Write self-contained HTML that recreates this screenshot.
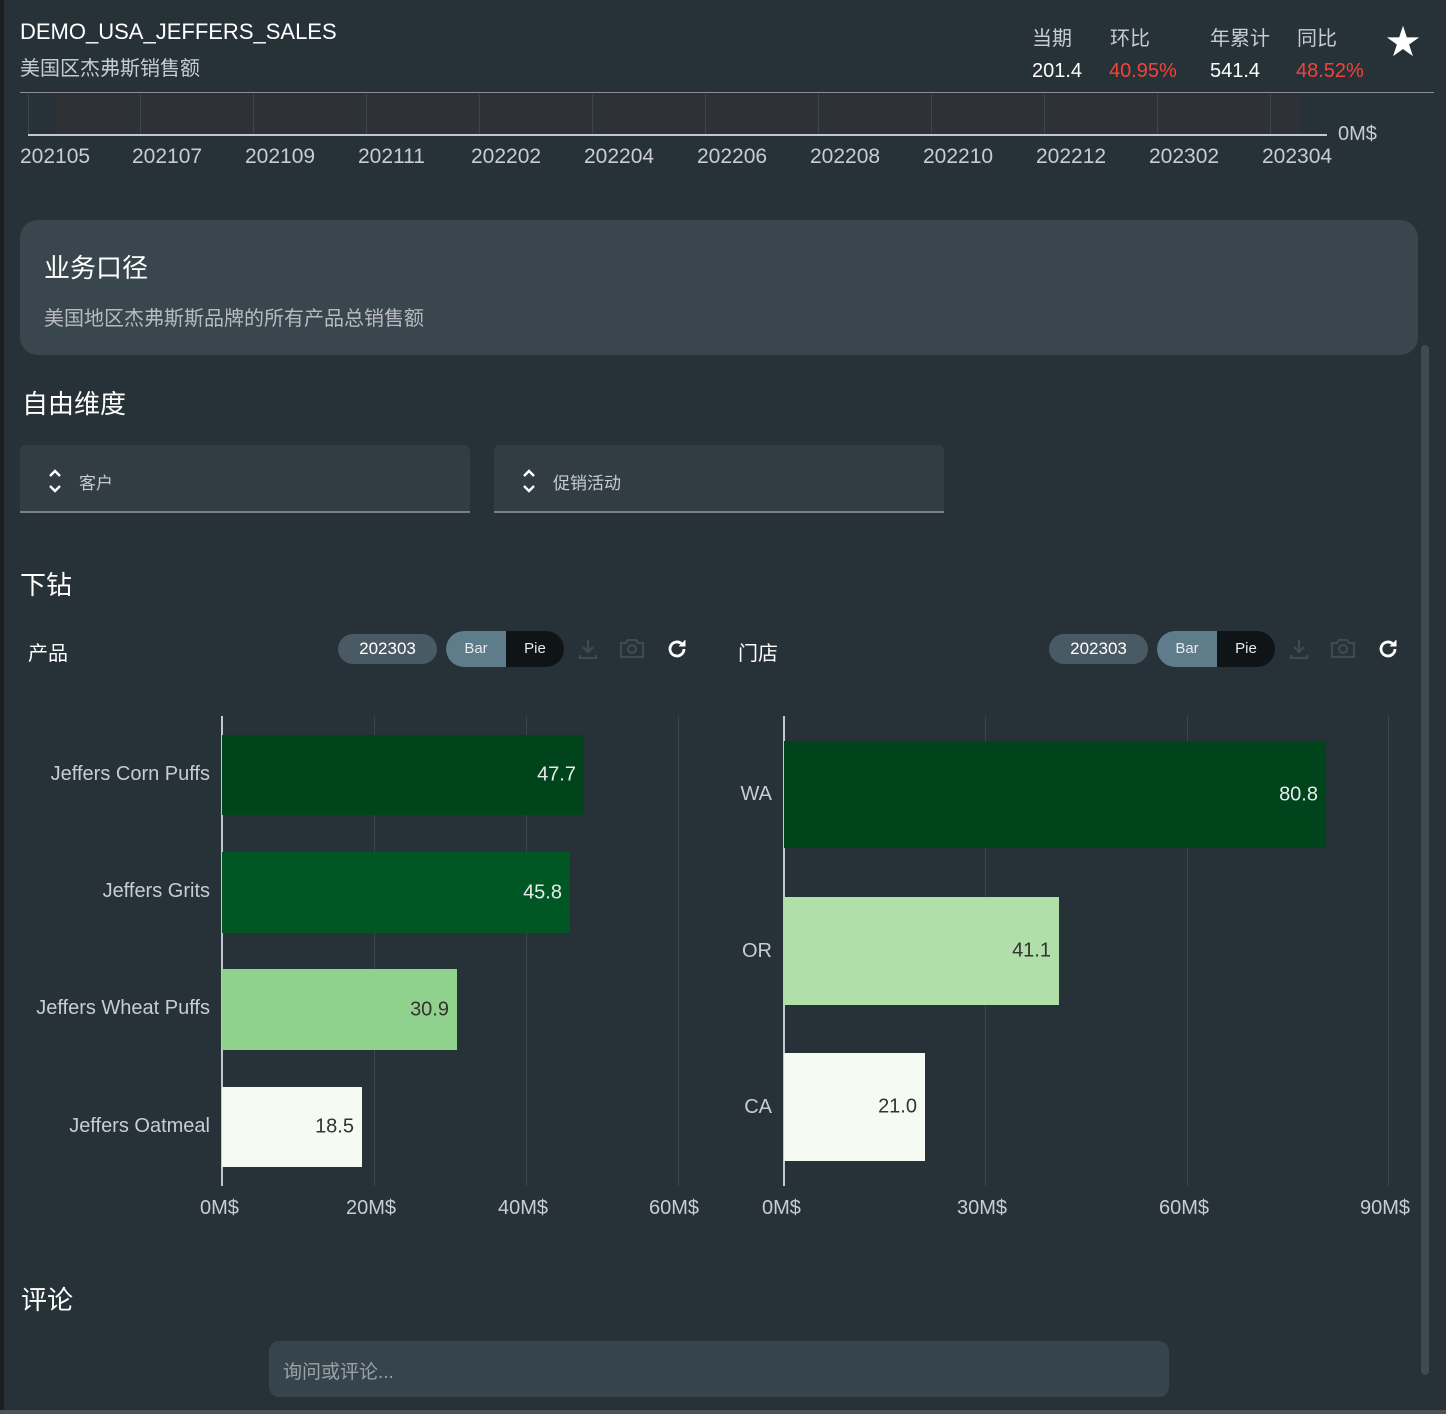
<!DOCTYPE html>
<html><head><meta charset="utf-8"><style>
*{margin:0;padding:0;box-sizing:border-box}
body{width:1446px;height:1414px;background:#263238;font-family:"Liberation Sans","Noto Sans CJK SC",sans-serif;color:#e8eaed;position:relative;overflow:hidden}
.a{position:absolute;white-space:nowrap}
.g{position:absolute;background:#3b464d;width:1px}
.lbl{color:#c9cbd6;font-size:20px}
.pill{position:absolute;height:30px;border-radius:15px;font-size:17px;line-height:30px;text-align:center}
.bar{position:absolute}
.val{position:absolute;font-size:20px;right:8px;top:50%;transform:translateY(-50%)}
</style></head><body>
<div class="a" style="left:0;top:0;width:4px;height:1414px;background:#1b1f22"></div>
<div class="a" style="left:20px;top:19px;font-size:22px;color:#fff">DEMO_USA_JEFFERS_SALES</div>
<div class="a" style="left:20px;top:52px;font-size:20px;color:#c8ccd0">美国区杰弗斯销售额</div>
<div class="a" style="left:1032px;top:22px;font-size:20px;color:#c8ccd0">当期</div>
<div class="a" style="left:1110px;top:22px;font-size:20px;color:#c8ccd0">环比</div>
<div class="a" style="left:1210px;top:22px;font-size:20px;color:#c8ccd0">年累计</div>
<div class="a" style="left:1297px;top:22px;font-size:20px;color:#c8ccd0">同比</div>
<div class="a" style="left:1032px;top:60px;font-size:20px;color:#fff">201.4</div>
<div class="a" style="left:1109px;top:60px;font-size:20px;color:#f0443a">40.95%</div>
<div class="a" style="left:1210px;top:60px;font-size:20px;color:#fff">541.4</div>
<div class="a" style="left:1296px;top:60px;font-size:20px;color:#f0443a">48.52%</div>
<div class="a" style="left:1386px;top:26px;font-size:34px;color:#fff;line-height:34px">★</div>
<div class="a" style="left:20px;top:92px;width:1414px;height:1px;background:#8b8f93"></div>
<div class="a" style="left:56px;top:94px;width:1243px;height:40px;background:#2e3135"></div>
<div class="g" style="left:28px;top:94px;height:40px"></div>
<div class="g" style="left:140px;top:94px;height:40px"></div><div class="g" style="left:253px;top:94px;height:40px"></div>
<div class="g" style="left:366px;top:94px;height:40px"></div><div class="g" style="left:479px;top:94px;height:40px"></div>
<div class="g" style="left:592px;top:94px;height:40px"></div><div class="g" style="left:705px;top:94px;height:40px"></div>
<div class="g" style="left:818px;top:94px;height:40px"></div><div class="g" style="left:931px;top:94px;height:40px"></div>
<div class="g" style="left:1044px;top:94px;height:40px"></div><div class="g" style="left:1157px;top:94px;height:40px"></div>
<div class="g" style="left:1270px;top:94px;height:40px"></div>
<div class="a" style="left:28px;top:134px;width:1299px;height:2px;background:#c4c6d4"></div>
<div class="a lbl" style="left:1338px;top:123px">0M$</div>
<div class="a lbl" style="left:20px;top:145px;font-size:21px">202105</div>
<div class="a lbl" style="left:132px;top:145px;font-size:21px">202107</div>
<div class="a lbl" style="left:245px;top:145px;font-size:21px">202109</div>
<div class="a lbl" style="left:358px;top:145px;font-size:21px">202111</div>
<div class="a lbl" style="left:471px;top:145px;font-size:21px">202202</div>
<div class="a lbl" style="left:584px;top:145px;font-size:21px">202204</div>
<div class="a lbl" style="left:697px;top:145px;font-size:21px">202206</div>
<div class="a lbl" style="left:810px;top:145px;font-size:21px">202208</div>
<div class="a lbl" style="left:923px;top:145px;font-size:21px">202210</div>
<div class="a lbl" style="left:1036px;top:145px;font-size:21px">202212</div>
<div class="a lbl" style="left:1149px;top:145px;font-size:21px">202302</div>
<div class="a lbl" style="left:1262px;top:145px;font-size:21px">202304</div>

<div class="a" style="left:20px;top:220px;width:1398px;height:135px;background:#3a464d;border-radius:18px"></div>
<div class="a" style="left:44px;top:248px;font-size:26px;color:#fff">业务口径</div>
<div class="a" style="left:44px;top:302px;font-size:20px;color:#b6bbbf">美国地区杰弗斯斯品牌的所有产品总销售额</div>
<div class="a" style="left:1421px;top:345px;width:8px;height:1030px;background:#3e4a50;border-radius:4px"></div>

<div class="a" style="left:22px;top:384px;font-size:26px;color:#fff">自由维度</div>
<div class="a" style="left:20px;top:445px;width:450px;height:68px;background:#323c43;border-radius:5px 5px 0 0;border-bottom:2px solid #7a8086"></div>
<svg class="a" style="left:48px;top:469px" width="14" height="24" viewBox="0 0 14 24" fill="none" stroke="#fff" stroke-width="2.4"><path d="M2 7l5-5 5 5M2 17l5 5 5-5"/></svg>
<div class="a" style="left:79px;top:469px;font-size:17px;color:#c8ccd0">客户</div>
<div class="a" style="left:494px;top:445px;width:450px;height:68px;background:#323c43;border-radius:5px 5px 0 0;border-bottom:2px solid #7a8086"></div>
<svg class="a" style="left:522px;top:469px" width="14" height="24" viewBox="0 0 14 24" fill="none" stroke="#fff" stroke-width="2.4"><path d="M2 7l5-5 5 5M2 17l5 5 5-5"/></svg>
<div class="a" style="left:553px;top:469px;font-size:17px;color:#c8ccd0">促销活动</div>

<div class="a" style="left:20px;top:565px;font-size:26px;color:#fff">下钻</div>

<div class="a" style="left:28px;top:637px;font-size:20px;color:#fff">产品</div>
<div class="pill" style="left:338px;top:634px;width:99px;background:#4a5a64;color:#fff">202303</div>
<div class="pill" style="left:446px;top:631px;width:118px;height:36px;border-radius:18px;background:#0f1417;overflow:hidden;line-height:36px;font-size:15px"><span style="position:absolute;left:0;width:60px;height:36px;background:#5e7c8a">Bar</span><span style="position:absolute;left:60px;width:58px">Pie</span></div>
<svg class="a" style="left:576px;top:637px" width="24" height="24" viewBox="0 0 24 24" fill="none" stroke="#3e4a52" stroke-width="2.2"><path d="M12 3v12M7 10l5 5 5-5M4 18v3h16v-3"/></svg>
<svg class="a" style="left:619px;top:636px" width="26" height="24" viewBox="0 0 26 24" fill="none" stroke="#3e4a52" stroke-width="2.2"><path d="M2 7h5l2-3h8l2 3h5v14H2z"/><circle cx="13" cy="13" r="4"/></svg>
<svg class="a" style="left:665px;top:637px" width="24" height="24" viewBox="0 0 24 24" fill="none" stroke="#fff" stroke-width="2.8"><path d="M19 12a7 7 0 1 1-2.5-5.4"/><path d="M20 3v6h-6" fill="#fff" stroke-width="1"/></svg>

<div class="a" style="left:738px;top:637px;font-size:20px;color:#fff">门店</div>
<div class="pill" style="left:1049px;top:634px;width:99px;background:#4a5a64;color:#fff">202303</div>
<div class="pill" style="left:1157px;top:631px;width:118px;height:36px;border-radius:18px;background:#0f1417;overflow:hidden;line-height:36px;font-size:15px"><span style="position:absolute;left:0;width:60px;height:36px;background:#5e7c8a">Bar</span><span style="position:absolute;left:60px;width:58px">Pie</span></div>
<svg class="a" style="left:1287px;top:637px" width="24" height="24" viewBox="0 0 24 24" fill="none" stroke="#3e4a52" stroke-width="2.2"><path d="M12 3v12M7 10l5 5 5-5M4 18v3h16v-3"/></svg>
<svg class="a" style="left:1330px;top:636px" width="26" height="24" viewBox="0 0 26 24" fill="none" stroke="#3e4a52" stroke-width="2.2"><path d="M2 7h5l2-3h8l2 3h5v14H2z"/><circle cx="13" cy="13" r="4"/></svg>
<svg class="a" style="left:1376px;top:637px" width="24" height="24" viewBox="0 0 24 24" fill="none" stroke="#fff" stroke-width="2.8"><path d="M19 12a7 7 0 1 1-2.5-5.4"/><path d="M20 3v6h-6" fill="#fff" stroke-width="1"/></svg>

<!-- left chart -->
<div class="g" style="left:374px;top:716px;height:470px"></div>
<div class="g" style="left:526px;top:716px;height:470px"></div>
<div class="g" style="left:678px;top:716px;height:470px"></div>
<div class="a" style="left:221px;top:716px;width:2px;height:470px;background:#c4c6d4"></div>
<div class="bar" style="left:222px;top:735px;width:362px;height:80px;background:#00441b"><span class="val" style="color:#e8eaed">47.7</span></div>
<div class="bar" style="left:222px;top:852px;width:348px;height:81px;background:#005724"><span class="val" style="color:#e8eaed">45.8</span></div>
<div class="bar" style="left:222px;top:969px;width:235px;height:81px;background:#8fd18d"><span class="val" style="color:#333">30.9</span></div>
<div class="bar" style="left:222px;top:1087px;width:140px;height:80px;background:#f5fbf2"><span class="val" style="color:#333">18.5</span></div>
<div class="a lbl" style="right:1236px;top:763px">Jeffers Corn Puffs</div>
<div class="a lbl" style="right:1236px;top:880px">Jeffers Grits</div>
<div class="a lbl" style="right:1236px;top:997px">Jeffers Wheat Puffs</div>
<div class="a lbl" style="right:1236px;top:1115px">Jeffers Oatmeal</div>
<div class="a lbl" style="left:200px;top:1197px">0M$</div>
<div class="a lbl" style="left:346px;top:1197px">20M$</div>
<div class="a lbl" style="left:498px;top:1197px">40M$</div>
<div class="a lbl" style="left:649px;top:1197px">60M$</div>

<!-- right chart -->
<div class="g" style="left:985px;top:716px;height:470px"></div>
<div class="g" style="left:1187px;top:716px;height:470px"></div>
<div class="g" style="left:1388px;top:716px;height:470px"></div>
<div class="a" style="left:783px;top:716px;width:2px;height:470px;background:#c4c6d4"></div>
<div class="bar" style="left:784px;top:741px;width:542px;height:107px;background:#00441b"><span class="val" style="color:#e8eaed">80.8</span></div>
<div class="bar" style="left:784px;top:897px;width:275px;height:108px;background:#b0dfaa"><span class="val" style="color:#333">41.1</span></div>
<div class="bar" style="left:784px;top:1053px;width:141px;height:108px;background:#f5fbf2"><span class="val" style="color:#333">21.0</span></div>
<div class="a lbl" style="right:674px;top:783px">WA</div>
<div class="a lbl" style="right:674px;top:940px">OR</div>
<div class="a lbl" style="right:674px;top:1096px">CA</div>
<div class="a lbl" style="left:762px;top:1197px">0M$</div>
<div class="a lbl" style="left:957px;top:1197px">30M$</div>
<div class="a lbl" style="left:1159px;top:1197px">60M$</div>
<div class="a lbl" style="left:1360px;top:1197px">90M$</div>

<div class="a" style="left:21px;top:1280px;font-size:26px;color:#fff">评论</div>
<div class="a" style="left:269px;top:1341px;width:900px;height:56px;background:#36444c;border-radius:10px"></div>
<div class="a" style="left:283px;top:1357px;font-size:19px;color:#9aa2a8">询问或评论...</div>
<div class="a" style="left:0;top:1410px;width:1446px;height:4px;background:#4d5256"></div>
</body></html>
